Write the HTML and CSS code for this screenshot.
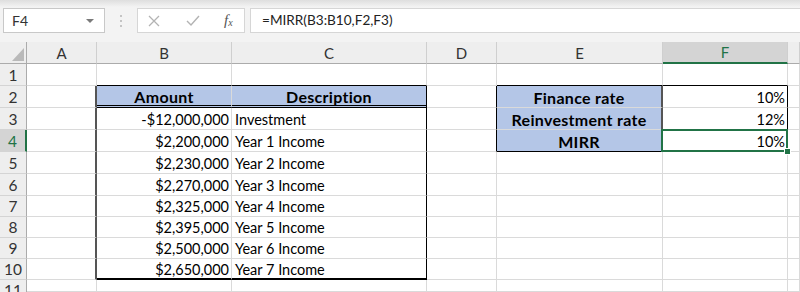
FILE: index.html
```html
<!DOCTYPE html>
<html lang="en">
<head>
	<meta charset="UTF-8">
	<title>MIRR</title>
	<link rel="stylesheet" href="styles.css">
</head>
<body>
	<div class="bar">
		<div class="namebox"><span>F4</span><span class="caret"></span></div>
		<div class="grip">
			<svg width="4" height="14" viewBox="0 0 4 14"><rect x="1" y="1" width="2" height="2" fill="#c4c4c4"/><rect x="1" y="6" width="2" height="2" fill="#c4c4c4"/><rect x="1" y="11" width="2" height="2" fill="#c4c4c4"/></svg>
		</div>
		<div class="fnbtns">
			<svg class="ico" width="12" height="12" viewBox="0 0 12 12"><path d="M1 1 L11 11 M11 1 L1 11" stroke="#b3b3b3" stroke-width="1.3" fill="none"/></svg>
			<svg class="ico" width="14" height="12" viewBox="0 0 14 12"><path d="M1 6 L5 10 L13 1" stroke="#b3b3b3" stroke-width="1.4" fill="none"/></svg>
			<span class="fx">f<sub>x</sub></span>
		</div>
		<div class="formula">=MIRR(B3:B10,F2,F3)</div>
	</div>

	<div class="sheet">
		<!-- column headers -->
		<div class="cell corner"><svg width="12" height="13" viewBox="0 0 12 13"><polygon points="12,0 12,13 0,13" fill="#b9b9b9"/></svg></div>
		<div class="cell col">A</div>
		<div class="cell col">B</div>
		<div class="cell col">C</div>
		<div class="cell col">D</div>
		<div class="cell col">E</div>
		<div class="cell col on">F</div>
		<div class="cell col"></div>

		<!-- 1 -->
		<div class="cell row">1</div>
		<div class="cell"></div>
		<div class="cell bb"></div>
		<div class="cell bb"></div>
		<div class="cell"></div>
		<div class="cell bb"></div>
		<div class="cell bb"></div>
		<div class="cell"></div>

		<!-- 2 -->
		<div class="cell row">2</div>
		<div class="cell brg"></div>
		<div class="cell fill b ctr bbd">Amount</div>
		<div class="cell fill b ctr bbd br">Description</div>
		<div class="cell br"></div>
		<div class="cell fill b ctr brg">Finance rate</div>
		<div class="cell r br">10%</div>
		<div class="cell"></div>

		<!-- 3 -->
		<div class="cell row">3</div>
		<div class="cell brg"></div>
		<div class="cell r">-$12,000,000</div>
		<div class="cell br">Investment</div>
		<div class="cell br"></div>
		<div class="cell fill b ctr brg">Reinvestment rate</div>
		<div class="cell r br">12%</div>
		<div class="cell"></div>

		<!-- 4 -->
		<div class="cell row on">4</div>
		<div class="cell brg"></div>
		<div class="cell r">$2,200,000</div>
		<div class="cell br">Year 1 Income</div>
		<div class="cell br"></div>
		<div class="cell fill b ctr brg bb">MIRR</div>
		<div class="cell r br bb sel">10%</div>
		<div class="cell"></div>

		<!-- 5 -->
		<div class="cell row">5</div>
		<div class="cell brg"></div>
		<div class="cell r">$2,230,000</div>
		<div class="cell br">Year 2 Income</div>
		<div class="cell"></div>
		<div class="cell"></div>
		<div class="cell"></div>
		<div class="cell"></div>

		<!-- 6 -->
		<div class="cell row">6</div>
		<div class="cell brg"></div>
		<div class="cell r">$2,270,000</div>
		<div class="cell br">Year 3 Income</div>
		<div class="cell"></div>
		<div class="cell"></div>
		<div class="cell"></div>
		<div class="cell"></div>

		<!-- 7 -->
		<div class="cell row">7</div>
		<div class="cell brg"></div>
		<div class="cell r">$2,325,000</div>
		<div class="cell br">Year 4 Income</div>
		<div class="cell"></div>
		<div class="cell"></div>
		<div class="cell"></div>
		<div class="cell"></div>

		<!-- 8 -->
		<div class="cell row">8</div>
		<div class="cell brg"></div>
		<div class="cell r">$2,395,000</div>
		<div class="cell br">Year 5 Income</div>
		<div class="cell"></div>
		<div class="cell"></div>
		<div class="cell"></div>
		<div class="cell"></div>

		<!-- 9 -->
		<div class="cell row">9</div>
		<div class="cell brg"></div>
		<div class="cell r">$2,500,000</div>
		<div class="cell br">Year 6 Income</div>
		<div class="cell"></div>
		<div class="cell"></div>
		<div class="cell"></div>
		<div class="cell"></div>

		<!-- 10 -->
		<div class="cell row">10</div>
		<div class="cell brg"></div>
		<div class="cell r bb2">$2,650,000</div>
		<div class="cell br bb2">Year 7 Income</div>
		<div class="cell"></div>
		<div class="cell"></div>
		<div class="cell"></div>
		<div class="cell"></div>

		<!-- 11 -->
		<div class="cell row cut">11</div>
		<div class="cell"></div>
		<div class="cell"></div>
		<div class="cell"></div>
		<div class="cell"></div>
		<div class="cell"></div>
		<div class="cell"></div>
		<div class="cell"></div>
	</div>
</body>
</html>
```

FILE: styles.css
```css
body {
	margin: 0;
	font-family: Lato, "Liberation Sans", sans-serif;
	background: #fff;
	overflow: hidden;
}

/* formula bar */
.bar {
	height: 42px;
	box-sizing: border-box;
	padding-top: 8px;
	display: flex;
	align-items: flex-start;
	background: linear-gradient(#dedede, #f3f3f3 7px, #f3f3f3);
}
.namebox {
	margin-left: 3px;
	width: 102px;
	height: 25px;
	box-sizing: border-box;
	border: 1px solid #c8c8c8;
	background: #fff;
	display: flex;
	align-items: center;
	justify-content: space-between;
	padding: 0 10px 0 8px;
	font-size: 14px;
	color: #333;
}
.caret {
	width: 0;
	height: 0;
	border-left: 4px solid transparent;
	border-right: 4px solid transparent;
	border-top: 4px solid #7a7a7a;
}
.grip {
	width: 32px;
	height: 25px;
	display: flex;
	align-items: center;
	justify-content: center;
}
.fnbtns {
	width: 108px;
	height: 25px;
	box-sizing: border-box;
	border: 1px solid #d6d6d6;
	background: #fff;
	display: flex;
	align-items: center;
	padding-left: 10px;
	gap: 26px;
}
.fx {
	font-family: "Liberation Serif", serif;
	font-style: italic;
	font-size: 15px;
	color: #555;
	margin-left: -2px;
}
.fx sub {
	font-size: 10px;
	vertical-align: -1px;
}
.formula {
	margin-left: 5px;
	flex: 1;
	height: 25px;
	box-sizing: border-box;
	border: 1px solid #d6d6d6;
	border-right: none;
	background: #fff;
	padding-left: 11px;
	font-size: 13.6px;
	line-height: 23px;
	color: #222;
}

/* grid */
.sheet {
	display: grid;
	grid-template-columns: 27px 70px 135px 195px 70px 166px 125px 12px;
	grid-template-rows: 22px repeat(6, 22px) repeat(4, 21px) 12px;
}
.cell {
	box-sizing: border-box;
	border-right: 1px solid #dadada;
	border-bottom: 1px solid #dadada;
	display: flex;
	align-items: center;
	padding: 1px 3px 0;
	font-size: 14.5px;
	white-space: nowrap;
	color: #000;
}
.col {
	background: #eeeeee;
	border-right: 1px solid #cfcfcf;
	border-bottom: 1px solid #ababab;
	justify-content: center;
	color: #333;
	font-size: 15px;
	padding: 0;
}
.col.on {
	background: #d4d4d4;
	border-bottom: 2px solid #217346;
	color: #217346;
}
.corner {
	background: #eeeeee;
	border-right: 1px solid #ababab;
	border-bottom: 1px solid #ababab;
	align-items: flex-end;
	justify-content: flex-end;
	padding: 0 2px 2px 0;
}
.row {
	background: #eeeeee;
	border-right: 1px solid #ababab;
	border-bottom: 1px solid #d4d4d4;
	justify-content: center;
	color: #333;
	font-size: 15.5px;
	padding: 0;
}
.row.on {
	background: #d4d4d4;
	border-right: 2px solid #217346;
	color: #217346;
}
.row.cut {
	align-items: flex-start;
	padding-top: 3px;
	border-bottom: none;
	line-height: 1;
}

.r {
	justify-content: flex-end;
	padding-right: 2px;
}
.ctr {
	justify-content: center;
}
.b {
	font-weight: bold;
	font-size: 16px;
	letter-spacing: 0.3px;
}
.fill {
	background: #b4c6e7;
}
.bb {
	border-bottom: 1px solid #000;
}
.bb2 {
	border-bottom: 2px solid #000;
}
.bbd {
	border-bottom: 3px double #000;
}
.br {
	border-right: 1px solid #000;
}
.brg {
	border-right: 2px solid #555;
}

/* active cell */
.sel {
	position: relative;
}
.sel::after {
	content: "";
	position: absolute;
	left: -2px;
	top: -1px;
	right: -1px;
	bottom: -1px;
	border: 2px solid #217346;
}
.sel::before {
	content: "";
	position: absolute;
	right: -4px;
	bottom: -4px;
	width: 5px;
	height: 5px;
	background: #217346;
	border: 1px solid #fff;
	z-index: 1;
}
```
